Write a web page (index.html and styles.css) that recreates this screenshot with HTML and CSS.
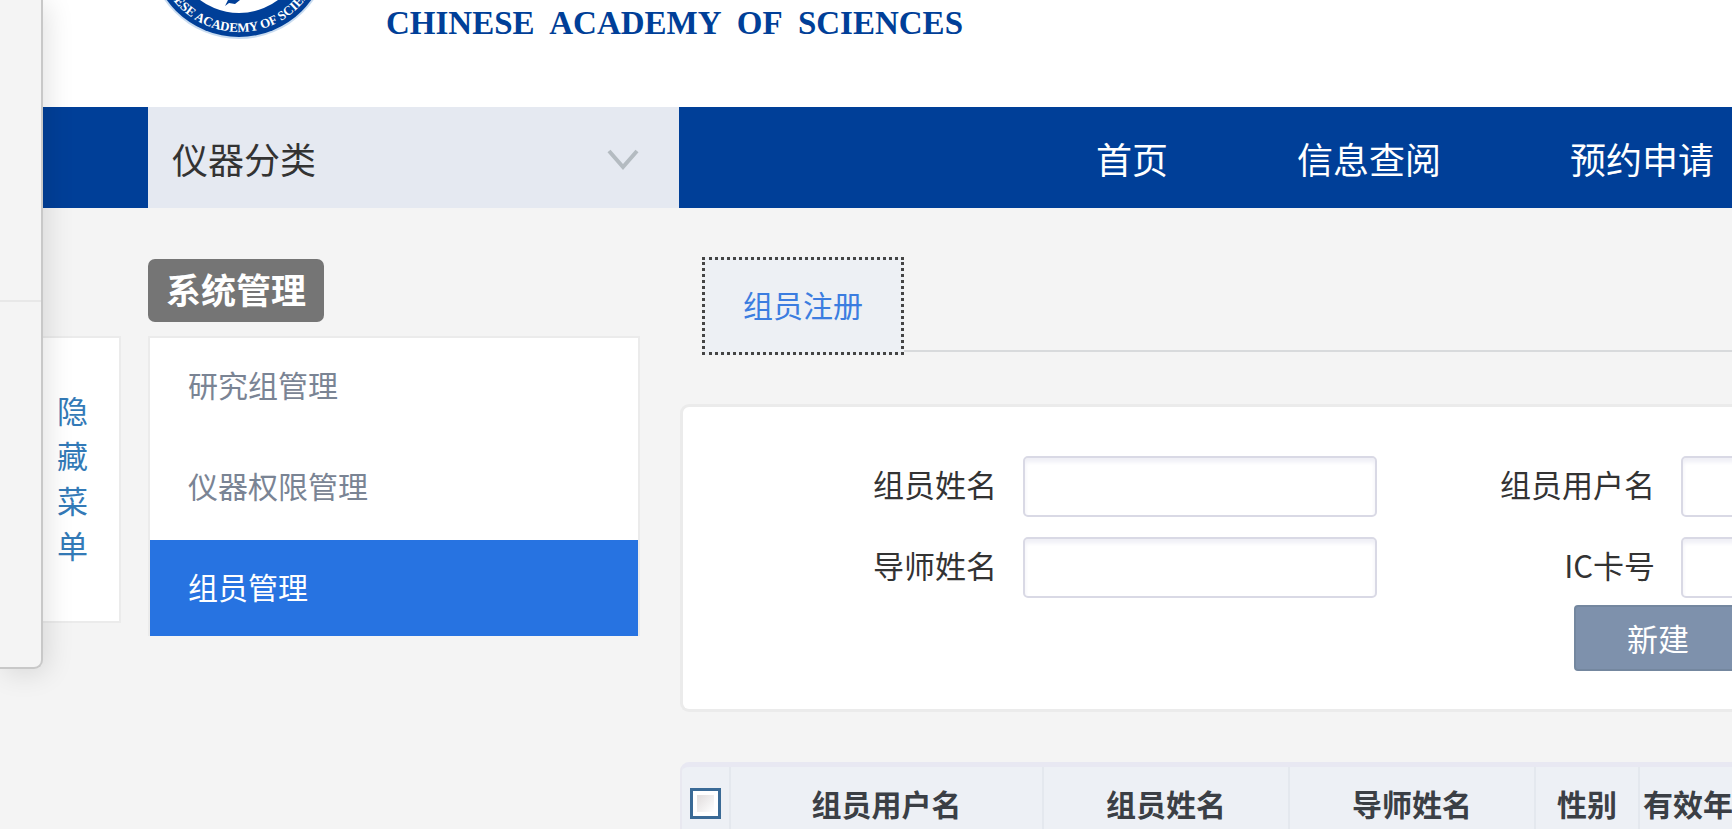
FILE: index.html
```html
<!DOCTYPE html>
<html lang="zh-CN">
<head>
    <meta charset="UTF-8">
    <meta name="viewport" content="width=device-width, initial-scale=1.0">
    <title>组员管理</title>
    <link rel="stylesheet" href="styles.css">
</head>
<body>
    <!-- 顶部标识 -->
    <header class="header">
        <svg class="logo" viewBox="149 0 184 40" aria-hidden="true">
            <defs>
                <path id="ring" d="M156 -52 A84 84 0 0 0 324 -52"/>
            </defs>
            <circle cx="240" cy="-52" r="91" fill="#c9dcf0"/>
            <circle cx="240" cy="-52" r="89" fill="#003f98"/>
            <circle cx="240" cy="-52" r="65" fill="#fff"/>
            <path d="M226 6 L229 0 H241 L236 4 L230 3 Z" fill="#003f98"/>
            <text class="logo-text" text-anchor="middle">
                <textPath href="#ring" startOffset="50%">CHINESE ACADEMY OF SCIENCES</textPath>
            </text>
        </svg>
        <p class="site-name">CHINESE  ACADEMY  OF  SCIENCES</p>
    </header>

    <!-- 导航 -->
    <nav class="navbar">
        <button class="category" type="button">
            仪器分类
            <svg class="arrow" viewBox="0 0 32 26" aria-hidden="true">
                <path d="M2 6 L16 22 L30 6" fill="none" stroke="#b4bbc1" stroke-width="4"/>
            </svg>
        </button>
        <div class="nav-links">
            <a href="#">首页</a>
            <a href="#">信息查阅</a>
            <a href="#">预约申请</a>
        </div>
    </nav>

    <!-- 主体 -->
    <div class="main">
        <a class="hide-menu" href="#">隐藏菜单</a>

        <aside class="sidebar">
            <h2 class="side-title">系统管理</h2>
            <ul class="side-menu">
                <li><a href="#">研究组管理</a></li>
                <li><a href="#">仪器权限管理</a></li>
                <li><a class="active" href="#">组员管理</a></li>
            </ul>
        </aside>

        <main class="content">
            <div class="tabs">
                <a class="tab" href="#">组员注册</a>
            </div>

            <form class="card">
                <div class="fields">
                    <label for="memberName">组员姓名</label>
                    <input type="text" id="memberName">
                    <label for="userName">组员用户名</label>
                    <input type="text" id="userName">
                    <label for="tutorName">导师姓名</label>
                    <input type="text" id="tutorName">
                    <label for="cardNo">IC卡号</label>
                    <input type="text" id="cardNo">
                </div>
                <button class="btn" type="button">新建</button>
            </form>

            <div class="table-box">
                <table>
                    <thead>
                        <tr>
                            <th class="col-check"><input type="checkbox" aria-label="全选"></th>
                            <th class="col-user">组员用户名</th>
                            <th class="col-name">组员姓名</th>
                            <th class="col-name">导师姓名</th>
                            <th class="col-sex">性别</th>
                            <th class="col-date">有效年</th>
                        </tr>
                    </thead>
                </table>
            </div>
        </main>
    </div>

    <!-- 左侧浮动面板 -->
    <div class="float-panel">
        <div class="float-head"></div>
    </div>
</body>
</html>
```

FILE: styles.css
```css
* {
    margin: 0;
    padding: 0;
    box-sizing: border-box;
}

body {
    position: relative;
    min-height: 100vh;
    background: #f4f4f4;
    color: #333;
    font-family: "Noto Sans CJK SC", sans-serif;
    font-size: 31px;
    overflow: hidden;
}

a {
    color: inherit;
    text-decoration: none;
}

button,
input {
    font: inherit;
}

/* 顶部标识 */
.header {
    display: flex;
    align-items: flex-start;
    gap: 54px;
    height: 107px;
    padding-left: 148px;
    background: #fff;
}

.logo {
    width: 184px;
    height: 40px;
}

.logo-text {
    fill: #fff;
    font-family: "Liberation Serif", serif;
    font-size: 13px;
    font-weight: bold;
}

.site-name {
    color: #003f98;
    font-family: "Liberation Serif", serif;
    font-size: 33px;
    font-weight: bold;
    line-height: 46px;
    white-space: pre;
}

/* 导航 */
.navbar {
    display: flex;
    height: 101px;
    padding-left: 148px;
    background: #003f98;
    font-size: 36px;
}

.category {
    display: flex;
    flex: none;
    align-items: center;
    justify-content: space-between;
    width: 531px;
    padding: 0 40px 0 24px;
    border: 0;
    background: #e5e9f1;
    color: #333;
    cursor: pointer;
}

.arrow {
    width: 32px;
    height: 26px;
}

.nav-links {
    display: flex;
    flex: 1;
    align-items: center;
    justify-content: flex-end;
    gap: 129px;
    padding-right: 18px;
    color: #fff;
}

/* 主体 */
.main {
    display: flex;
    align-items: flex-start;
}

.hide-menu {
    width: 121px;
    height: 287px;
    margin-top: 128px;
    padding: 49px 34px 0 55px;
    border: 2px solid #ebebeb;
    background: #fff;
    color: #337ab7;
    line-height: 45px;
}

.sidebar {
    width: 492px;
    margin: 51px 40px 0 27px;
}

.side-title {
    display: inline-block;
    padding: 0 18px 4px;
    border-radius: 7px;
    background: #757575;
    color: #fff;
    font-size: 35px;
    line-height: 59px;
    vertical-align: top;
}

.side-menu {
    margin-top: 14px;
    border: 2px solid #ebebeb;
    border-bottom: 0;
    background: #fff;
    font-size: 30px;
    list-style: none;
}

.side-menu a {
    display: block;
    padding: 0 0 8px 38px;
    color: #7a8494;
    line-height: 93px;
}

.side-menu .active {
    padding-bottom: 4px;
    background: #2773e1;
    color: #fff;
    line-height: 92px;
}

.content {
    flex: 1;
    min-width: 0;
    margin-top: 49px;
}

/* 标签页 */
.tabs {
    display: flex;
    padding-left: 22px;
}

.tabs::after {
    content: "";
    flex: 1;
    margin-bottom: 3px;
    border-bottom: 2px solid #d8dadc;
}

.tab {
    padding: 0 38px 4px;
    border: 3px dotted #444;
    background: #edf0f4;
    color: #3b7de0;
    font-size: 30px;
    line-height: 88px;
}

/* 查询表单 */
.card {
    height: 308px;
    margin-top: 49px;
    padding-top: 49px;
    border: 3px solid #ebebeb;
    border-right: 0;
    border-radius: 9px 0 0 9px;
    background: #fff;
    overflow: hidden;
}

.fields {
    display: grid;
    grid-template-columns: 314px 354px 252px 354px;
    gap: 20px 26px;
    align-items: center;
}

.fields label {
    padding-bottom: 6px;
    line-height: 55px;
    text-align: right;
}

.fields input {
    width: 100%;
    height: 61px;
    padding: 0 12px;
    border: 2px solid #d9d9e5;
    border-radius: 5px;
    background: #fff;
    box-shadow: inset 0 4px 4px #efeff6;
}

.btn {
    width: 168px;
    height: 66px;
    margin: 7px 0 0 891px;
    border: 2px solid #74879f;
    border-radius: 4px;
    background: #7e91ac;
    color: #fff;
    line-height: 62px;
    cursor: pointer;
}

/* 列表 */
.table-box {
    margin-top: 50px;
    border-top: 5px solid #e8e8f2;
    border-left: 2px solid #e8e8f0;
    border-radius: 9px 0 0 0;
    background: #edf0f5;
    overflow: hidden;
}

table {
    width: 100%;
    border-collapse: collapse;
    table-layout: fixed;
}

th {
    height: 72px;
    border-right: 2px solid #e4e8ee;
    color: #3b3f45;
    font-size: 30px;
    white-space: nowrap;
}

.col-check {
    width: 48px;
}

.col-user {
    width: 313px;
}

.col-name {
    width: 246px;
}

.col-sex {
    width: 104px;
}

.col-date {
    padding-left: 3px;
    border-right: 0;
    text-align: left;
}

th input {
    appearance: none;
    display: block;
    width: 31px;
    height: 31px;
    margin: 0 auto;
    border: 3px solid #3a6a96;
    background: linear-gradient(135deg, #e0dcdc, #fff) center / 17px 17px no-repeat #fff;
}

/* 左侧浮动面板 */
.float-panel {
    position: absolute;
    top: 0;
    left: 0;
    width: 43px;
    height: 669px;
    border: solid #c8c8c8;
    border-width: 0 2px 2px 0;
    border-bottom-right-radius: 9px;
    background: #f4f4f4;
    box-shadow: 4px 4px 28px rgba(0, 0, 0, 0.12);
}

.float-head {
    height: 302px;
    border-bottom: 2px solid #e8e8e8;
}
```
